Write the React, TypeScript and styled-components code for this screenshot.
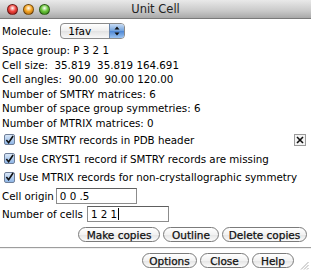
import React from "react";
import styled, { createGlobalStyle } from "styled-components";

const Global = createGlobalStyle`
  html, body { margin: 0; padding: 0; background: #ffffff; }
  body { font-family: "DejaVu Sans", "Liberation Sans", sans-serif; font-size: 10px; color: #000; }
`;

const Window = styled.div`
  position: relative;
  width: 311px;
  height: 272px;
  background: #ffffff;
  display: flex;
  flex-direction: column;
  overflow: hidden;
`;

const TitleBar = styled.div`
  height: 18px;
  border-bottom: 1px solid #7a7a7a;
  background: linear-gradient(#e9e9e9, #c9c9c9 60%, #a9a9a9);
  display: flex;
  align-items: center;
  position: relative;
  flex-shrink: 0;
`;

const Lights = styled.div`
  display: flex;
  gap: 5px;
  padding-left: 7px;
`;

const Light = styled.span<{ $c: string; $d: string }>`
  width: 11px;
  height: 11px;
  border-radius: 50%;
  background: radial-gradient(circle at 50% 35%, #ffffff 0%, ${(p) => p.$c} 45%, ${(p) => p.$d} 100%);
  border: 0.5px solid rgba(0, 0, 0, 0.45);
  box-sizing: border-box;
`;

const Title = styled.div`
  position: absolute;
  left: 0;
  right: 0;
  text-align: center;
  font-size: 11.5px;
  color: #222;
  pointer-events: none;
`;

const Body = styled.div`
  padding: 3px 4px 0 2px;
  display: flex;
  flex-direction: column;
`;

const Row = styled.div`
  display: flex;
  align-items: center;
  height: 17px;
`;

const Label = styled.span`
  white-space: pre;
  font-size: 10.3px;
`;

const Popup = styled.div`
  width: 65px;
  height: 16px;
  box-sizing: border-box;
  border: 1px solid #8a8a8a;
  border-radius: 4px;
  background: linear-gradient(#ffffff, #eeeeee 50%, #e2e2e2 51%, #f8f8f8);
  display: flex;
  align-items: center;
  overflow: hidden;
  margin-left: 9px;
`;

const PopupText = styled.span`
  flex: 1;
  padding-left: 7px;
  font-size: 10.5px;
`;

const PopupArrows = styled.div`
  width: 14px;
  height: 100%;
  background: linear-gradient(#c8dcf4, #6fa0dc 50%, #4d86d4 51%, #9cc4f2);
  border-left: 1px solid #6a86ab;
  display: flex;
  align-items: center;
  justify-content: center;
`;

const Info = styled.div`
  line-height: 14.5px;
  font-size: 10.3px;
  white-space: pre;
  margin-top: 4px;
`;

const CheckRow = styled.div<{ $h: number }>`
  display: flex;
  align-items: center;
  height: ${(p) => p.$h}px;
  padding-left: 2px;
`;

const Box = styled.span`
  width: 11px;
  height: 11px;
  box-sizing: border-box;
  border: 1px solid #6f7f99;
  border-radius: 2px;
  background: linear-gradient(#d9e7f8, #8fb6e6);
  display: flex;
  align-items: center;
  justify-content: center;
  margin-right: 4px;
  flex-shrink: 0;
`;

const CloseBox = styled.span`
  margin-left: auto;
  width: 12px;
  height: 12px;
  box-sizing: border-box;
  border: 1px solid #9a9a9a;
  background: #f4f4f4;
  display: flex;
  align-items: center;
  justify-content: center;
  margin-right: 1px;
`;

const FieldRow = styled.div<{ $mt: number }>`
  display: flex;
  align-items: center;
  height: 16px;
  margin-top: ${(p) => p.$mt}px;
`;

const Input = styled.div<{ $w: number; $ml: number }>`
  width: ${(p) => p.$w}px;
  height: 16px;
  box-sizing: border-box;
  border: 1px solid #8c8c8c;
  border-top-color: #5e5e5e;
  margin-left: ${(p) => p.$ml}px;
  padding-left: 3px;
  display: flex;
  align-items: center;
  white-space: pre;
  font-size: 10.3px;
`;

const Caret = styled.span`
  display: inline-block;
  width: 1px;
  height: 12px;
  background: #000;
  margin-left: 1px;
`;

const Buttons = styled.div<{ $mt: number }>`
  display: flex;
  justify-content: flex-end;
  gap: 3px;
  margin-top: ${(p) => p.$mt}px;
  padding-right: 4px;
`;

const Btn = styled.div<{ $w: number }>`
  width: ${(p) => p.$w}px;
  height: 15px;
  box-sizing: border-box;
  border: 1px solid #7b7b7b;
  border-radius: 8px;
  background: linear-gradient(#ffffff, #f2f2f2 50%, #e4e4e4 51%, #fbfbfb);
  display: flex;
  align-items: center;
  justify-content: center;
  font-size: 10.5px;
  color: #111;
  -webkit-text-stroke: 0.25px #111;
`;

const Separator = styled.div`
  height: 1px;
  background: #9d9d9d;
  margin-top: 5px;
  border-bottom: 1px solid #f0f0f0;
`;

const Grip = styled.svg`
  position: absolute;
  right: 2px;
  bottom: 2px;
`;

const Check = () => (
  <svg width="10" height="10" viewBox="0 0 10 10">
    <path d="M1.5 5 L4 8 L9 0.5" fill="none" stroke="#111" strokeWidth="1.8" />
  </svg>
);

export default function App() {
  return (
    <Window>
      <Global />
      <TitleBar>
        <Lights>
          <Light $c="#f0463f" $d="#9b1410" />
          <Light $c="#f5a623" $d="#a55a0a" />
          <Light $c="#6cc63c" $d="#2e7a12" />
        </Lights>
        <Title>Unit Cell</Title>
      </TitleBar>
      <Body>
        <Row>
          <Label>Molecule:</Label>
          <Popup>
            <PopupText>1fav</PopupText>
            <PopupArrows>
              <svg width="6" height="10" viewBox="0 0 6 10">
                <path d="M3 0.5 L5.5 3.5 H0.5 Z M3 9.5 L5.5 6.5 H0.5 Z" fill="#111" />
              </svg>
            </PopupArrows>
          </Popup>
        </Row>
        <Info>
          {"Space group: P 3 2 1\n"}
          {"Cell size:  35.819  35.819 164.691\n"}
          {"Cell angles:  90.00  90.00 120.00\n"}
          {"Number of SMTRY matrices: 6\n"}
          {"Number of space group symmetries: 6\n"}
          {"Number of MTRIX matrices: 0"}
        </Info>
        <CheckRow $h={19}>
          <Box><Check /></Box>
          <Label>Use SMTRY records in PDB header</Label>
          <CloseBox>
            <svg width="8" height="8" viewBox="0 0 8 8">
              <path d="M1 1 L7 7 M7 1 L1 7" stroke="#111" strokeWidth="1.6" />
            </svg>
          </CloseBox>
        </CheckRow>
        <CheckRow $h={19}>
          <Box><Check /></Box>
          <Label>Use CRYST1 record if SMTRY records are missing</Label>
        </CheckRow>
        <CheckRow $h={18}>
          <Box><Check /></Box>
          <Label>Use MTRIX records for non-crystallographic symmetry</Label>
        </CheckRow>
        <FieldRow $mt={2}>
          <Label>Cell origin</Label>
          <Input $w={81} $ml={2}>0 0 .5</Input>
        </FieldRow>
        <FieldRow $mt={2}>
          <Label>Number of cells</Label>
          <Input $w={82} $ml={4}>
            1 2 1<Caret />
          </Input>
        </FieldRow>
      </Body>
      <Buttons $mt={5}>
        <Btn $w={82}>Make copies</Btn>
        <Btn $w={56}>Outline</Btn>
        <Btn $w={85}>Delete copies</Btn>
      </Buttons>
      <Separator />
      <Buttons $mt={4}>
        <Btn $w={55}>Options</Btn>
        <Btn $w={49}>Close</Btn>
        <Btn $w={42}>Help</Btn>
        <span style={{ width: 10 }} />
      </Buttons>
      <Grip width="9" height="9" viewBox="0 0 9 9">
        <path d="M8.5 1 L1 8.5 M8.5 4 L4 8.5 M8.5 7 L7 8.5" stroke="#999" strokeWidth="0.8" />
      </Grip>
    </Window>
  );
}
